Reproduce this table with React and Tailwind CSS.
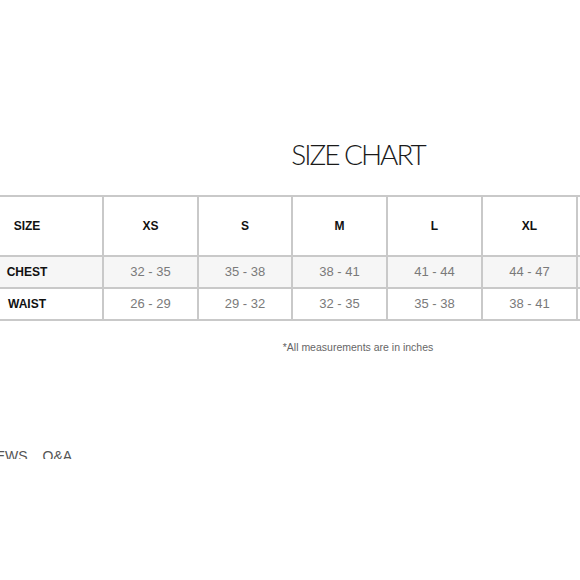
import React from 'react';

const sizes = ['XS', 'S', 'M', 'L', 'XL', ''];
const rows = [
  { label: 'CHEST', values: ['32 - 35', '35 - 38', '38 - 41', '41 - 44', '44 - 47', ''], shaded: true },
  { label: 'WAIST', values: ['26 - 29', '29 - 32', '32 - 35', '35 - 38', '38 - 41', ''], shaded: false },
];

const SizeChart = () => {
  return (
    <div className="w-[580px] h-[580px] overflow-hidden bg-white font-['Liberation_Sans',Arial,sans-serif]">
      <div className="pt-[140px] pl-[136px] flex justify-center">
        <h1 className="text-[28px] leading-none font-light text-[#1a1a1a] font-['Lato','Liberation_Sans',sans-serif] tracking-[-2px]">
          SIZE CHART
        </h1>
      </div>

      <div className="mt-[27px] ml-[-50px] w-max grid grid-cols-[150px_93px_92px_93px_93px_93px_93px] gap-[2px] p-[2px] bg-[#c9c9c9]">
        <div className="h-[58px] bg-white flex items-center justify-center text-[12px] font-bold text-[#111]">SIZE</div>
        {sizes.map((s, i) => (
          <div key={i} className="h-[58px] bg-white flex items-center justify-center text-[12px] font-bold text-[#111]">
            {s}
          </div>
        ))}
        {rows.map((row) => (
          <React.Fragment key={row.label}>
            <div className={`h-[30px] flex items-center justify-center text-[12px] font-bold text-[#111] ${row.shaded ? 'bg-[#f6f6f6]' : 'bg-white'}`}>
              {row.label}
            </div>
            {row.values.map((v, i) => (
              <div
                key={i}
                className={`h-[30px] flex items-center justify-center text-[13px] text-[#7a7a7a] ${row.shaded ? 'bg-[#f6f6f6]' : 'bg-white'}`}
              >
                {v}
              </div>
            ))}
          </React.Fragment>
        ))}
      </div>

      <div className="mt-[21px] pl-[136px] flex justify-center">
        <p className="text-[10.5px] leading-none text-[#666]">*All measurements are in inches</p>
      </div>

      <div className="mt-[96px] h-[10px] overflow-hidden">
        <div className="ml-[-37px] flex gap-[15px] text-[14px] leading-none text-[#555]">
          <span>REVIEWS</span>
          <span>Q&amp;A</span>
        </div>
      </div>
    </div>
  );
};

export default SizeChart;
